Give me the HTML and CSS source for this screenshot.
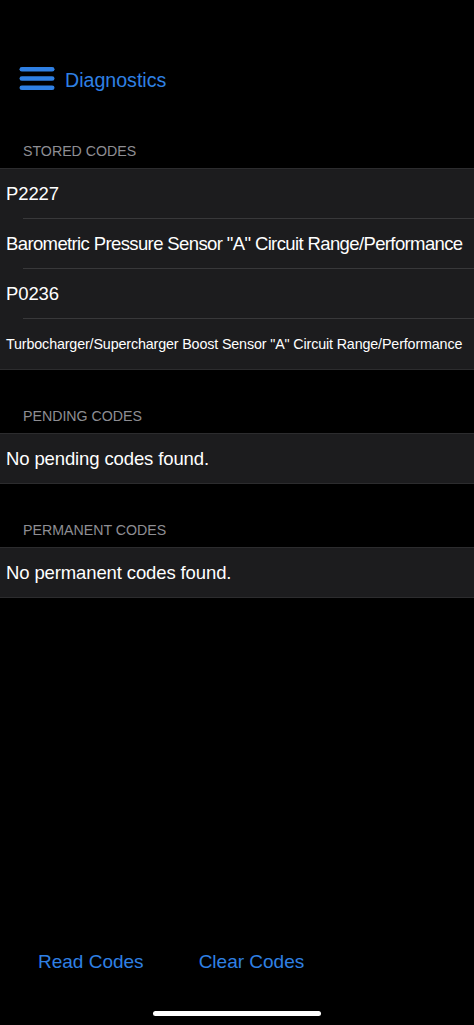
FILE: index.html
```html
<!DOCTYPE html>
<html>
<head>
<meta charset="utf-8">
<link rel="stylesheet" href="styles.css">
</head>
<body>
<div class="screen">
  <header class="nav">
    <svg class="menu-icon" width="36" height="25" viewBox="0 0 36 25">
      <rect x="0.5" y="0" width="35" height="4.6" rx="2.3" fill="#2f80e4"/>
      <rect x="0.5" y="9.2" width="35" height="4.6" rx="2.3" fill="#2f80e4"/>
      <rect x="0.5" y="18.4" width="35" height="4.6" rx="2.3" fill="#2f80e4"/>
    </svg>
    <span class="nav-title">Diagnostics</span>
  </header>

  <div class="section-title first">STORED CODES</div>
  <div class="group">
    <div class="row">P2227</div>
    <div class="row tight">Barometric Pressure Sensor "A" Circuit Range/Performance</div>
    <div class="row">P0236</div>
    <div class="row small">Turbocharger/Supercharger Boost Sensor "A" Circuit Range/Performance</div>
  </div>

  <div class="section-title">PENDING CODES</div>
  <div class="group single">
    <div class="row">No pending codes found.</div>
  </div>

  <div class="section-title">PERMANENT CODES</div>
  <div class="group single">
    <div class="row">No permanent codes found.</div>
  </div>

  <footer class="toolbar">
    <div class="actions">
      <span class="action">Read Codes</span>
      <span class="action">Clear Codes</span>
    </div>
    <div class="home-indicator"></div>
  </footer>
</div>
</body>
</html>
```

FILE: styles.css
```css
html, body {
  margin: 0;
  padding: 0;
  background: #000;
}

body {
  font-family: "Liberation Sans", Arial, sans-serif;
  color: #fff;
}

.screen {
  height: 1025px;
  display: flex;
  flex-direction: column;
}

.nav {
  margin-top: 55px;
  height: 44px;
  display: flex;
  align-items: center;
  padding-left: 19px;
  gap: 10px;
}

.menu-icon {
  display: block;
  margin-top: 4px;
}

.nav-title {
  color: #2f80e4;
  font-size: 19.6px;
  margin-top: 6px;
}

.section-title {
  height: 63px;
  box-sizing: border-box;
  display: flex;
  align-items: flex-end;
  padding: 0 0 8px 23px;
  font-size: 14.2px;
  line-height: 17px;
  color: #8e8e93;
}

.section-title.first {
  height: 69px;
}

.group {
  background: #1c1c1e;
  border-top: 1px solid #2c2c2e;
  border-bottom: 1px solid #2c2c2e;
}

.row {
  height: 50px;
  box-sizing: border-box;
  display: flex;
  align-items: center;
  padding-left: 6px;
  font-size: 18.5px;
  letter-spacing: -0.12px;
  white-space: nowrap;
  position: relative;
}

.group.single .row {
  height: 49px;
}

.row + .row::before {
  content: "";
  position: absolute;
  top: -1px;
  left: 23px;
  right: 0;
  height: 1px;
  background: #38383a;
}

.row.tight {
  letter-spacing: -0.62px;
}

.row.small {
  font-size: 14.3px;
  letter-spacing: -0.14px;
}

.toolbar {
  margin-top: auto;
  display: flex;
  flex-direction: column;
  align-items: center;
  padding-bottom: 9px;
}

.actions {
  align-self: stretch;
  display: flex;
  gap: 55px;
  padding-left: 38px;
  height: 28px;
  align-items: center;
  margin-bottom: 35px;
}

.action {
  color: #2f80e4;
  font-size: 19px;
}

.home-indicator {
  width: 168px;
  height: 5px;
  border-radius: 3px;
  background: #fff;
}
```
